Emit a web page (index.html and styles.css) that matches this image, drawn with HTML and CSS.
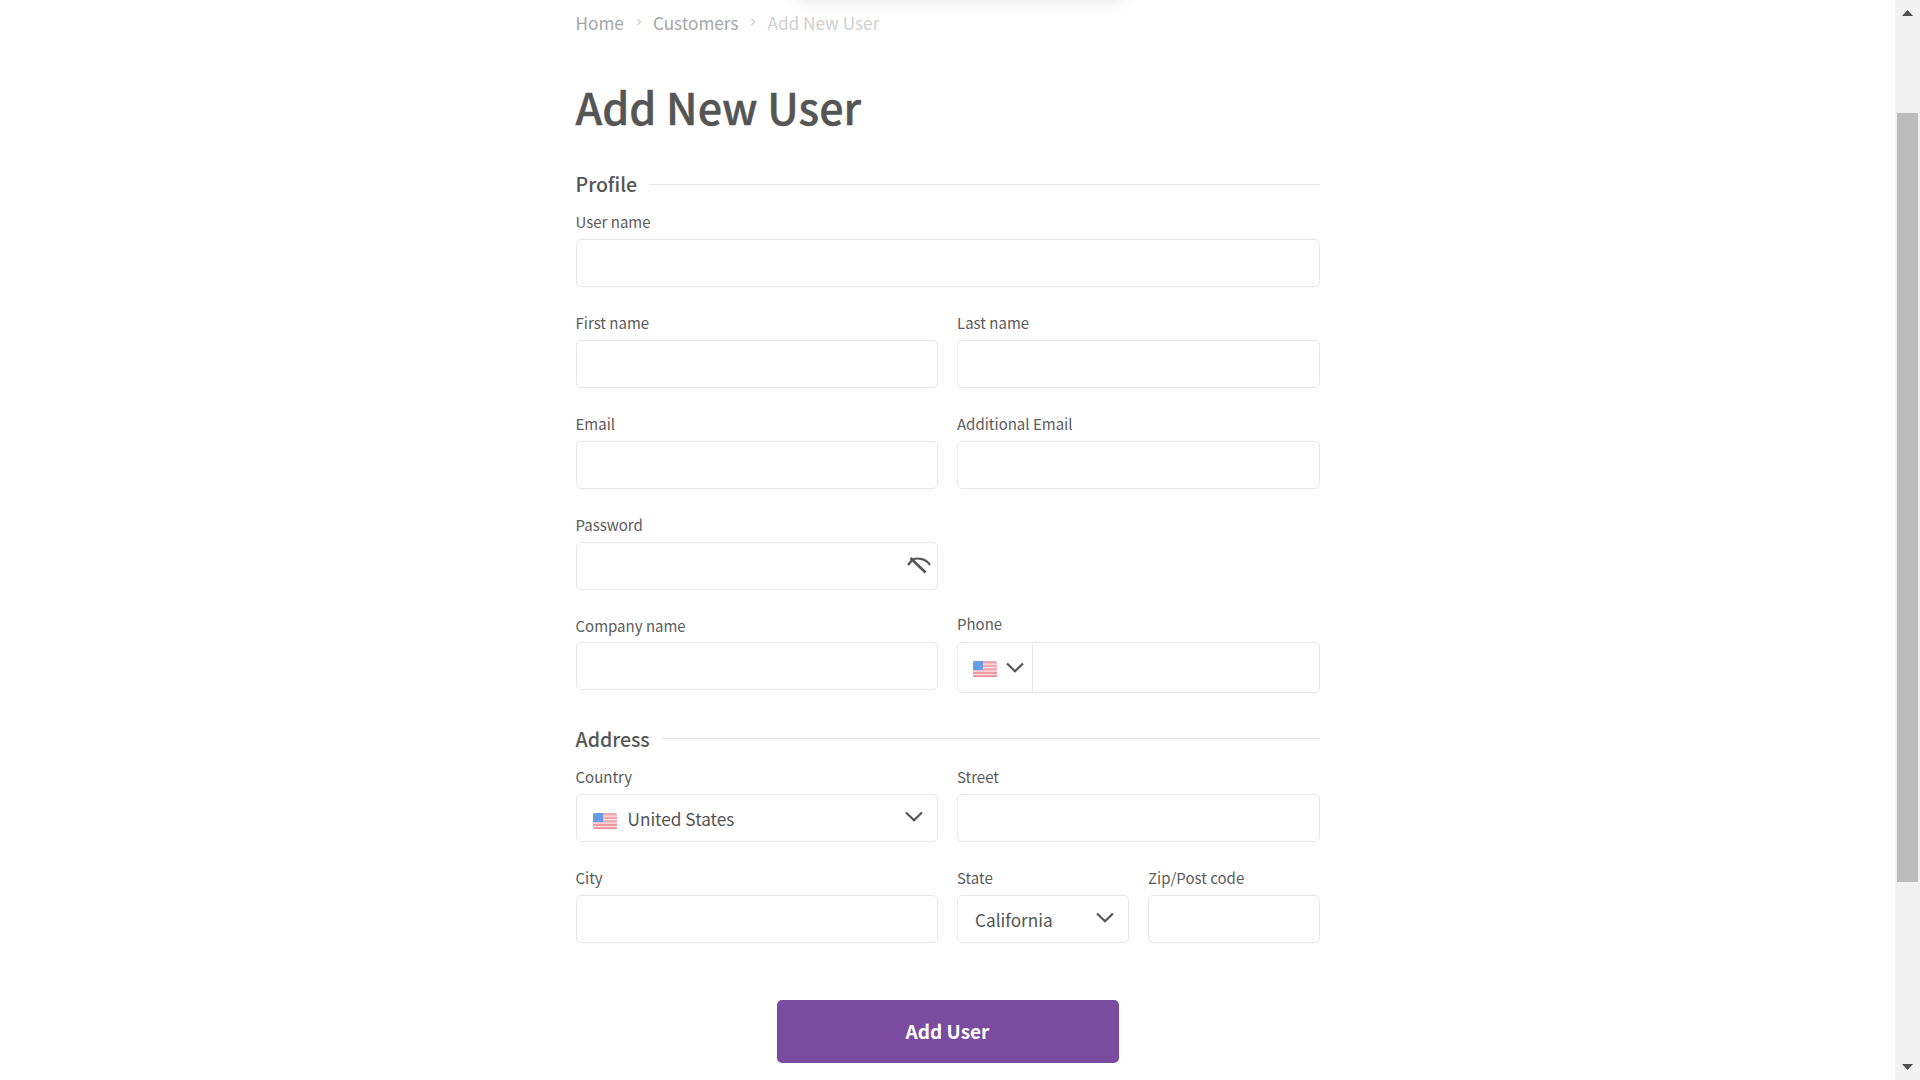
FILE: index.html
```html
<!DOCTYPE html>
<html lang="en">
<head>
<meta charset="utf-8">
<title>Add New User</title>
<link rel="stylesheet" href="styles.css">
</head>
<body>
<div class="page">
  <main class="content">
    <div class="top-shadow"></div>
    <form class="form">
      <nav class="crumbs">
        <span class="crumb">Home</span>
        <svg class="sep" width="6" height="8" viewBox="0 0 6 8"><path d="M1.5 1l3 3-3 3" fill="none" stroke="#aaa" stroke-width="1"/></svg>
        <span class="crumb">Customers</span>
        <svg class="sep" width="6" height="8" viewBox="0 0 6 8"><path d="M1.5 1l3 3-3 3" fill="none" stroke="#aaa" stroke-width="1"/></svg>
        <span class="crumb current">Add New User</span>
      </nav>
      <h1 class="title">Add New User</h1>

      <div class="section-head first"><span>Profile</span><i class="rule"></i></div>
      <div class="row one">
        <div class="field"><label>User name</label><div class="box"></div></div>
      </div>
      <div class="row">
        <div class="field"><label>First name</label><div class="box"></div></div>
        <div class="field"><label>Last name</label><div class="box"></div></div>
      </div>
      <div class="row">
        <div class="field"><label>Email</label><div class="box"></div></div>
        <div class="field"><label>Additional Email</label><div class="box"></div></div>
      </div>
      <div class="row">
        <div class="field"><label>Password</label>
          <div class="box end">
            <svg class="eye" width="24" height="17" viewBox="0 0 24 17">
              <path d="M6.500 2C11 .800 19 1.500 23 8" fill="none" stroke="#555" stroke-width="2.200"/>
              <line x1="1" y1="8" x2="6.500" y2="1.500" stroke="#555" stroke-width="2.400"/>
              <line x1="3.500" y1="1" x2="18.500" y2="15.500" stroke="#555" stroke-width="2.600"/>
            </svg>
          </div>
        </div>
      </div>
      <div class="row last">
        <div class="field"><label class="low">Company name</label><div class="box"></div></div>
        <div class="field"><label class="high">Phone</label>
          <div class="box phone">
            <div class="dial">
              <svg class="flag" width="24" height="16" viewBox="0 0 24 16"><use href="#us"/></svg>
              <svg width="18" height="11" viewBox="0 0 18 11"><path d="M1 1.500L9 9.300l8-7.800" fill="none" stroke="#555" stroke-width="2.200"/></svg>
            </div>
          </div>
        </div>
      </div>

      <div class="section-head"><span>Address</span><i class="rule"></i></div>
      <div class="row">
        <div class="field"><label>Country</label>
          <div class="box select">
            <svg class="flag" width="24" height="16" viewBox="0 0 24 16"><use href="#us"/></svg>
            <span class="value">United States</span>
            <svg class="chev" width="18" height="11" viewBox="0 0 18 11"><path d="M1 1.500L9 9.300l8-7.800" fill="none" stroke="#555" stroke-width="2.200"/></svg>
          </div>
        </div>
        <div class="field"><label>Street</label><div class="box"></div></div>
      </div>
      <div class="row">
        <div class="field"><label>City</label><div class="box"></div></div>
        <div class="split">
          <div class="field"><label>State</label>
            <div class="box select state">
              <span class="value">California</span>
              <svg class="chev" width="18" height="11" viewBox="0 0 18 11"><path d="M1 1.500L9 9.300l8-7.800" fill="none" stroke="#555" stroke-width="2.200"/></svg>
            </div>
          </div>
          <div class="field"><label>Zip/Post code</label><div class="box"></div></div>
        </div>
      </div>
      <div class="actions"><button type="button" class="submit">Add User</button></div>
    </form>
  </main>
  <aside class="scrollbar">
    <svg width="11" height="6" viewBox="0 0 11 6" class="arrow"><path d="M5.500 0L11 6H0z" fill="#505050"/></svg>
    <div class="track"><div class="thumb"></div></div>
    <svg width="11" height="6" viewBox="0 0 11 6" class="arrow"><path d="M0 0h11L5.500 6z" fill="#505050"/></svg>
  </aside>
</div>
<svg width="0" height="0" class="defs">
  <defs>
    <g id="us">
      <rect width="24" height="16" rx="2" fill="#f4a7ae"/>
      <rect y="2.500" width="24" height="1.200" fill="#fbe4e6"/>
      <rect y="6" width="24" height="1.200" fill="#fbe4e6"/>
      <rect y="9.500" width="24" height="1.200" fill="#fbe4e6"/>
      <rect y="11.500" width="24" height="1.200" fill="#f28b95"/>
      <rect y="13" width="24" height="1.200" fill="#fbe4e6"/>
      <rect y="14.500" width="24" height="1.500" rx="1" fill="#f28b95"/>
      <path d="M2 0h8v9H0V2a2 2 0 0 1 2-2z" fill="#6a9be6"/>
    </g>
  </defs>
</svg>
</body>
</html>
```
FILE: styles.css
```css
* { box-sizing: border-box; }
html, body { margin: 0; height: 100%; overflow: hidden; background: #fff; }
body { font-family: "Noto Sans CJK SC", "Noto Sans", sans-serif; color: #555; }
.page { display: flex; height: 1080px; }
.content { flex: 1; position: relative; display: flex; justify-content: center; overflow: hidden; }
.top-shadow { position: absolute; left: 797px; top: -30px; width: 326px; height: 30px; box-shadow: 0 0 16px rgba(0,0,0,.12); }
.form { width: 744px; display: flex; flex-direction: column; }
.crumbs { display: flex; align-items: center; height: 24px; margin-top: 11px; font-size: 17.200px; line-height: 24px; color: #a6a6a6; }
.crumb.current { color: #d0d0d0; }
.sep { margin: 0 11px 0 12px; position: relative; top: -1px; }
.title { margin: 41.400px 0 0; font-size: 43px; line-height: 60px; font-weight: 500; color: #555; -webkit-text-stroke: .4px #555; }
.section-head { display: flex; align-items: center; gap: 12px; height: 26px; font-size: 19.500px; line-height: 26px; font-weight: 500; margin-top: 32.500px; }
.section-head.first { margin-top: 34.800px; }
.rule { flex: 1; height: 1px; background: #e6e6e6; }
.row { display: grid; grid-template-columns: 1fr 1fr; gap: 19px; margin-bottom: 25.800px; }
.row.one { grid-template-columns: 1fr; }
.row.last { margin-bottom: 0; }
.section-head + .row { margin-top: 15px; }
.field { display: flex; flex-direction: column; min-width: 0; }
label { display: block; height: 27px; font-size: 15px; line-height: 20px; color: #5c5c5c; }
label.low { position: relative; top: 1px; }
label.high { position: relative; top: -1px; }
.box { height: 48px; border: 1px solid #e8e8e8; border-radius: 5px; display: flex; align-items: center; background: #fff; }
.box.end { justify-content: flex-end; padding-right: 6px; }
.box.phone { height: 51px; }
.dial { display: flex; align-items: center; gap: 9px; height: 100%; width: 75px; padding-left: 15px; border-right: 1px solid #e8e8e8; }
.dial .flag { position: relative; top: 1px; }
.select { padding: 0 14px 0 16px; gap: 11px; font-size: 17.200px; }
.state { padding-left: 17px; }
.value { flex: 1; position: relative; top: 1px; }
.select .flag { position: relative; top: 3px; }
.chev { position: relative; top: -1px; }
.split { display: grid; grid-template-columns: 171.500px 1fr; gap: 19.500px; }
.actions { display: flex; justify-content: center; margin-top: 31.500px; }
.submit { width: 342px; height: 63px; border: 0; border-radius: 5px; background: #7a4b9f; color: #fff; font: 600 19px/26px "Noto Sans CJK SC", sans-serif; }
.scrollbar { width: 25px; background: #f1f1f1; display: flex; flex-direction: column; align-items: center; height: 1080px; }
.arrow { flex: none; margin: 10px 0; }
.track { flex: 1; width: 21px; position: relative; }
.thumb { position: absolute; left: 0; right: 0; top: 87px; height: 769px; background: #bcbcbc; }
.defs { position: absolute; }
```
